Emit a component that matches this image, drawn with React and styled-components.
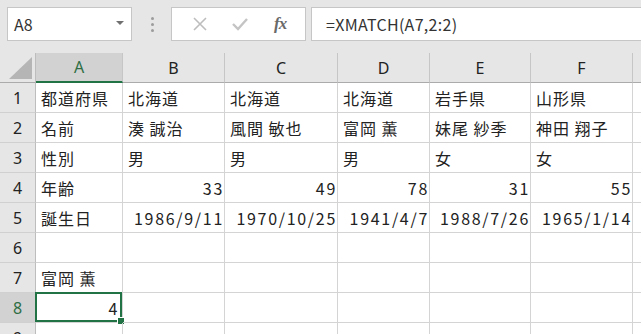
import React from "react";
import styled, { createGlobalStyle } from "styled-components";

const GlobalStyle = createGlobalStyle`
  html, body {
    margin: 0;
    padding: 0;
    background: #ffffff;
    overflow: hidden;
  }
  body {
    font-family: "Noto Sans CJK JP", "Noto Sans", sans-serif;
    color: #222;
  }
`;

const Page = styled.div`
  width: 641px;
  height: 334px;
  overflow: hidden;
  background: #fff;
`;

const TopBar = styled.div`
  display: flex;
  align-items: stretch;
  background: #e6e6e6;
  padding: 7px 0 12px 7px;
  height: 34px;
`;

const NameBox = styled.div`
  width: 125px;
  box-sizing: border-box;
  background: #fff;
  border: 1px solid #c6c6c6;
  display: flex;
  align-items: center;
  justify-content: space-between;
  padding: 0 7px 0 6px;
  font-size: 16px;
  color: #333;
`;

const Caret = styled.span`
  width: 0;
  height: 0;
  border-left: 4px solid transparent;
  border-right: 4px solid transparent;
  border-top: 4px solid #707070;
  margin-top: -2px;
`;

const Spacer = styled.div`
  width: 39px;
  display: flex;
  align-items: center;
  justify-content: center;
`;

const Dots = styled.div`
  display: flex;
  flex-direction: column;
  gap: 3px;
  margin-left: 1px;
  span {
    width: 3px;
    height: 3px;
    border-radius: 50%;
    background: #9c9c9c;
  }
`;

const FxBox = styled.div`
  width: 135px;
  box-sizing: border-box;
  background: #fff;
  border: 1px solid #c6c6c6;
  display: flex;
  align-items: center;
  justify-content: space-around;
  padding: 0 6px 0 8px;
`;

const FxLabel = styled.span`
  font-family: "Liberation Serif", serif;
  font-style: italic;
  font-weight: bold;
  font-size: 17px;
  color: #6a6a6a;
  letter-spacing: -1px;
`;

const Formula = styled.div`
  flex: 1;
  margin-left: 5px;
  margin-right: -2px;
  background: #fff;
  border: 1px solid #c6c6c6;
  display: flex;
  align-items: center;
  padding-left: 14px;
  font-size: 16px;
  letter-spacing: 0.3px;
  color: #333;
`;

const Sheet = styled.div`
  display: grid;
  grid-template-columns: 36px 87px 102px 113px 92px 101px 102px 1fr;
  grid-auto-rows: 30px;
  font-size: 16px;
`;

const Corner = styled.div`
  box-sizing: border-box;
  background: #e6e6e6;
  border-right: 1px solid #bdbdbd;
  border-bottom: 1px solid #ababab;
  position: relative;
  &::after {
    content: "";
    position: absolute;
    right: 3px;
    bottom: 3px;
    width: 0;
    height: 0;
    border-left: 23px solid transparent;
    border-bottom: 22px solid #b5b5b5;
  }
`;

const ColHead = styled.div`
  box-sizing: border-box;
  background: ${(p) => (p.$active ? "#d2d2d2" : "#e6e6e6")};
  border-right: 1px solid #c6c6c6;
  border-bottom: ${(p) => (p.$active ? "2px solid #217346" : "1px solid #ababab")};
  color: ${(p) => (p.$active ? "#2f6e44" : "#222")};
  display: flex;
  align-items: center;
  justify-content: center;
  font-family: "Noto Sans", sans-serif;
  font-size: 16px;
`;

const RowHead = styled.div`
  box-sizing: border-box;
  background: ${(p) => (p.$active ? "#d2d2d2" : "#e6e6e6")};
  border-right: 1px solid #bdbdbd;
  border-bottom: 1px solid #d0d0d0;
  color: ${(p) => (p.$active ? "#2f6e44" : "#222")};
  display: flex;
  align-items: center;
  justify-content: center;
  font-family: "Noto Sans", sans-serif;
  font-size: 16px;
`;

const Cell = styled.div`
  box-sizing: border-box;
  border-right: 1px solid #d4d4d4;
  border-bottom: 1px solid #d4d4d4;
  display: flex;
  align-items: center;
  justify-content: ${(p) => (p.$right ? "flex-end" : "flex-start")};
  padding: 0 ${(p) => (p.$selected ? "3px" : p.$right ? "0" : "3px")} 0 5px;
  white-space: nowrap;
  overflow: visible;
  letter-spacing: ${(p) => (p.$right ? "1.7px" : "1px")};
  position: relative;
`;

const Selection = styled.div`
  position: absolute;
  inset: -1px 0 0 -1px;
  border: 2px solid #217346;
  pointer-events: none;
  &::after {
    content: "";
    position: absolute;
    right: -5px;
    bottom: -5px;
    width: 6px;
    height: 6px;
    background: #217346;
    border: 1px solid #fff;
  }
`;

const columns = ["A", "B", "C", "D", "E", "F", ""];

const rows = [
  ["都道府県", "北海道", "北海道", "北海道", "岩手県", "山形県"],
  ["名前", "湊 誠治", "風間 敏也", "富岡 薫", "妹尾 紗季", "神田 翔子"],
  ["性別", "男", "男", "男", "女", "女"],
  ["年齢", 33, 49, 78, 31, 55],
  ["誕生日", "1986/9/11", "1970/10/25", "1941/4/7", "1988/7/26", "1965/1/14"],
  [],
  ["富岡 薫"],
  [4],
  [],
];

const isRight = (v) => typeof v === "number" || /^\d+\/\d+\/\d+$/.test(String(v));

const App = () => {
  return (
    <Page>
      <GlobalStyle />
      <TopBar>
        <NameBox>
          A8
          <Caret />
        </NameBox>
        <Spacer>
          <Dots>
            <span />
            <span />
            <span />
          </Dots>
        </Spacer>
        <FxBox>
          <svg width="14" height="14" viewBox="0 0 14 14">
            <path d="M1 1 L13 13 M13 1 L1 13" stroke="#bdbdbd" strokeWidth="1.6" fill="none" />
          </svg>
          <svg width="16" height="14" viewBox="0 0 16 14">
            <path d="M1 7 L6 12 L15 2" stroke="#c4c4c4" strokeWidth="2.4" fill="none" />
          </svg>
          <FxLabel>fx</FxLabel>
        </FxBox>
        <Formula>=XMATCH(A7,2:2)</Formula>
      </TopBar>
      <Sheet>
        <Corner />
        {columns.map((c, i) => (
          <ColHead key={i} $active={c === "A"}>
            {c}
          </ColHead>
        ))}
        {rows.map((row, r) => (
          <React.Fragment key={r}>
            <RowHead $active={r === 7}>{r + 1}</RowHead>
            {columns.map((_, c) => {
              const v = row[c];
              const selected = r === 7 && c === 0;
              return (
                <Cell key={c} $right={v !== undefined && isRight(v)} $selected={selected}>
                  {v}
                  {selected && <Selection />}
                </Cell>
              );
            })}
          </React.Fragment>
        ))}
      </Sheet>
    </Page>
  );
};

export default App;
